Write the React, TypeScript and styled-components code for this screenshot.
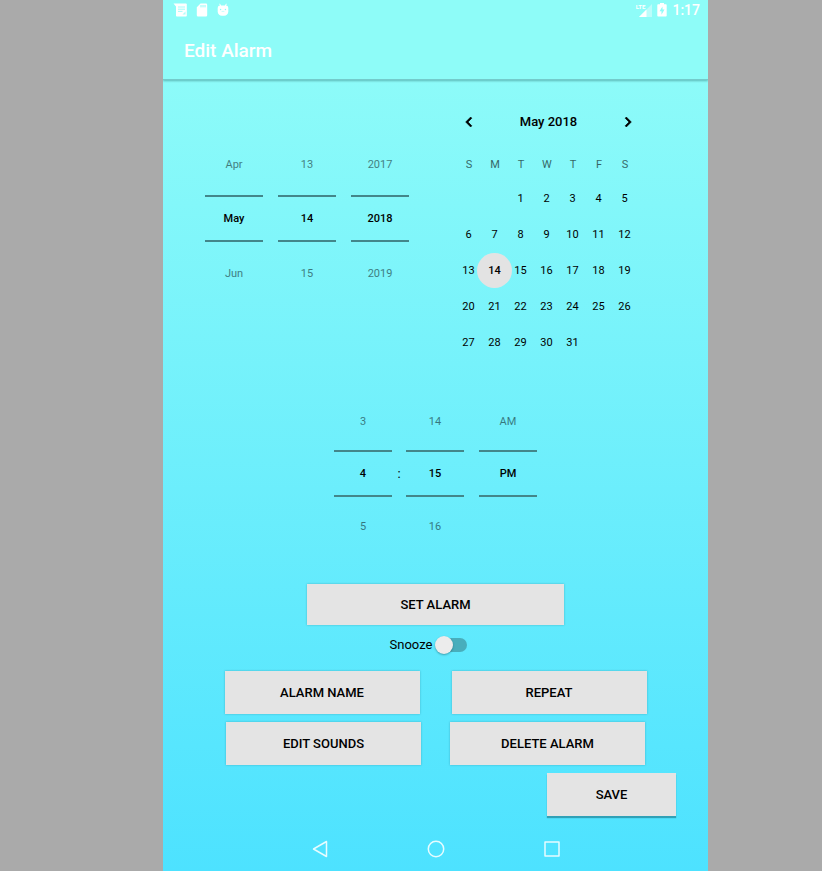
import React, { useState } from "react";
import styled, { createGlobalStyle } from "styled-components";

const GlobalStyle = createGlobalStyle`
  * { box-sizing: border-box; }
  body {
    margin: 0;
    background: #aaaaaa;
    color: #000000;
    font-family: Roboto, "Liberation Sans", sans-serif;
  }
  button, input { font-family: inherit; color: inherit; }
  button { border: 0; padding: 0; background: none; cursor: pointer; }
`;

const Page = styled.div`
  display: grid;
  grid-template-columns: 163fr minmax(480px, 545fr) 114fr;
  min-height: 100vh;
`;

const Screen = styled.div`
  grid-column: 2;
  display: flex;
  flex-direction: column;
  overflow: hidden;
  background: linear-gradient(#8ffcf8, #8dfbf9 9%, #4de2ff);
`;

const Header = styled.header`
  background: #8efcf8;
  border-bottom: 1px solid #74cbcb;
  box-shadow: 0 1px 2px rgba(0, 60, 60, 0.35);
`;

const StatusBar = styled.div`
  display: flex;
  align-items: center;
  justify-content: space-between;
  height: 20px;
  padding: 0 8px 0 10px;
  color: #ffffff;
`;

const StatusGroup = styled.div<{ $gap: number }>`
  display: flex;
  align-items: center;
  gap: ${(p) => p.$gap}px;
`;

const Clock = styled.span`
  font-size: 14px;
  font-weight: 500;
  line-height: 20px;
`;

const Title = styled.h1`
  margin: 0;
  padding: 4px 21px 1px;
  color: #ffffff;
  font-size: 19px;
  font-weight: 500;
  line-height: 54px;
`;

const Main = styled.main`
  flex: 1;
  display: flex;
  flex-direction: column;
  align-items: center;
  padding-top: 30px;
`;

const DateRow = styled.section`
  display: flex;
  justify-content: center;
  gap: 47px;
  width: 100%;
  padding: 0 28px 0 0;
`;

const DatePickers = styled.div`
  display: flex;
  gap: 15px;
  padding-top: 44px;
`;

const TimePickers = styled.section`
  display: grid;
  grid-template-columns: 58px 14px 58px 58px;
  margin-top: 65px;
  padding-right: 15px;

  > :last-child { margin-left: 15px; }
`;

const Colon = styled.span`
  align-self: center;
  text-align: center;
  font-size: 13px;
  line-height: 20px;
`;

const PickerColumn = styled.div<{ $gap: number }>`
  display: flex;
  flex-direction: column;
  gap: ${(p) => p.$gap}px;
  width: 58px;
`;

const PickerStep = styled.button`
  height: 20px;
  font-size: 11px;
  line-height: 22px;
  text-align: center;
  opacity: 0.5;
`;

const PickerValue = styled.input`
  width: 100%;
  height: 47px;
  padding: 0;
  border: solid #43868a;
  border-width: 2px 0;
  border-radius: 0;
  background: none;
  font-size: 11px;
  font-weight: 500;
  text-align: center;
  outline: 0;
`;

const Calendar = styled.div`
  width: 182px;
`;

const MonthBar = styled.div`
  display: flex;
  align-items: center;
  justify-content: space-between;
  height: 24px;
  padding: 0 0 0 3px;
  margin-bottom: 14px;
`;

const MonthName = styled.h2`
  margin: 0;
  font-size: 13px;
  font-weight: 500;
  line-height: 24px;
`;

const MonthButton = styled.button`
  display: flex;
  width: 20px;
  height: 20px;
`;

const MonthView = styled.div`
  height: 198px;
  overflow: hidden;
`;

const MonthTable = styled.table`
  width: 100%;
  table-layout: fixed;
  border-collapse: collapse;
  font-size: 11px;

  th {
    height: 32px;
    padding: 0;
    font-weight: 400;
    opacity: 0.6;
  }

  td {
    height: 36px;
    padding: 0;
    text-align: center;
  }
`;

const Day = styled.button<{ $selected: boolean }>`
  display: grid;
  place-items: center;
  width: 35px;
  height: 35px;
  margin: 0 -4px 0 -5px;
  border-radius: 50%;
  font-size: 11px;
  font-weight: ${(p) => (p.$selected ? 500 : 400)};
  background: ${(p) => (p.$selected ? "#e3e3e3" : "none")};
`;

const ActionButton = styled.button<{ $width: number; $raised?: boolean }>`
  width: ${(p) => p.$width}px;
  height: 43px;
  background: #e4e4e4;
  font-size: 13px;
  font-weight: 500;
  box-shadow: ${(p) =>
    p.$raised
      ? "0 2px 1px rgba(0, 60, 75, 0.4)"
      : "0 0 2px rgba(0, 60, 75, 0.3)"};
`;

const SetButton = styled(ActionButton)`
  height: 41px;
  margin-top: 48px;
`;

const SnoozeLabel = styled.label`
  display: flex;
  align-items: center;
  gap: 3px;
  height: 18px;
  margin: 11px 14px 17px 0;
  font-size: 13px;
  line-height: 18px;
`;

const Switch = styled.input`
  appearance: none;
  display: flex;
  align-items: center;
  width: 32px;
  height: 14px;
  margin: 0;
  border-radius: 7px;
  background: linear-gradient(90deg, transparent 8px, #48aebc 8px);
  cursor: pointer;

  &::before {
    content: "";
    width: 18px;
    height: 18px;
    border-radius: 50%;
    background: #ececec;
    box-shadow: 0 1px 2px rgba(0, 50, 60, 0.4);
  }

  &:checked { background: #48aebc; }
  &:checked::before { margin-left: 14px; }
`;

const ButtonRow = styled.div<{ $gap: number }>`
  display: flex;
  gap: ${(p) => p.$gap}px;
  margin-bottom: 8px;
`;

const SaveRow = styled.div`
  display: flex;
  justify-content: flex-end;
  width: 100%;
  padding-right: 32px;
`;

const NavBar = styled.nav`
  display: flex;
  align-items: center;
  justify-content: center;
  gap: 92px;
  height: 44px;
`;

const NavButton = styled.button`
  display: flex;
  width: 24px;
  height: 24px;
`;

const MessageIcon = () => (
  <svg width="14" height="14" viewBox="0 0 14 14" aria-hidden="true">
    <path fill="#fff" d="M.5 .5H13a.8.8 0 0 1 .8.8v11.400a.8.8 0 0 1-.8.8H3.800a.8.8 0 0 1-.8-.8V3.500z" />
    <path fill="none" stroke="#8efcf8" strokeWidth="1" d="M5 4h7M5 6.200h7M5 8.400h4.500" opacity=".8" />
    <path fill="#8efcf8" d="M9.500 11.500l3-3v3z" opacity=".7" />
  </svg>
);

const SdCardIcon = () => (
  <svg width="12" height="14" viewBox="0 0 12 14" aria-hidden="true">
    <path fill="#fff" d="M4.500.5H10a1.200 1.200 0 0 1 1.200 1.200v10.600a1.200 1.200 0 0 1-1.200 1.200H2a1.200 1.200 0 0 1-1.200-1.200V4.200z" />
    <path stroke="#8efcf8" strokeWidth="1" d="M5 2v2.400M7 2v2.400M9 2v2.400" />
  </svg>
);

const DroidIcon = () => (
  <svg width="12" height="14" viewBox="0 0 12 14" aria-hidden="true">
    <path fill="#fff" d="M3 2.500h6c1.600 0 2.300 1.200 2.300 3v3c0 2.600-1.800 4.300-4.300 4.300H5C2.500 12.800.7 11.100.7 8.500v-3c0-1.800.7-3 2.300-3z" />
    <path stroke="#fff" strokeWidth="1" d="M2.700.8l1 2.400M9.300.8l-1 2.400" />
    <circle cx="3.600" cy="6.500" r=".7" fill="#8efcf8" />
    <circle cx="8.400" cy="6.500" r=".7" fill="#8efcf8" />
    <path d="M4.600 8.400h2.800" stroke="#8efcf8" strokeWidth=".5" />
  </svg>
);

const Signal = styled.span`
  display: flex;
  align-items: flex-start;
  font-size: 6px;
  font-weight: 700;
  line-height: 7px;
  height: 14px;

  svg { margin: 1px 0 0 -6px; }
`;

const SignalIcon = () => (
  <svg width="13" height="13" viewBox="0 0 13 13" aria-hidden="true">
    <path fill="#fff" opacity=".4" d="M13 0v13H0z" />
    <path fill="#fff" d="M7.500 5.500V13H0z" />
  </svg>
);

const BatteryIcon = () => (
  <svg width="10" height="14" viewBox="0 0 10 14" aria-hidden="true">
    <path fill="#fff" d="M3 0h4v1.300h1.900a.8.8 0 0 1 .8.8v10.600a.8.8 0 0 1-.8.8H1.100a.8.8 0 0 1-.8-.8V2.100a.8.8 0 0 1 .8-.8H3z" />
    <path fill="#8efcf8" d="M5.500 3.500v3h2L4.500 11.700V8.200h-2z" />
  </svg>
);

const Chevron = ({ right }: { right?: boolean }) => (
  <svg width="20" height="20" viewBox="0 0 24 24" fill="#000" stroke="#000" strokeWidth=".7" aria-hidden="true">
    <path
      d={
        right
          ? "M8.590 16.590 13.170 12 8.590 7.410 10 6l6 6-6 6z"
          : "M15.410 7.410 14 6l-6 6 6 6 1.410-1.410L10.830 12z"
      }
    />
  </svg>
);

type PickerProps = { label: string; values: string[]; gap: number };

function Picker({ label, values, gap }: PickerProps) {
  const [previous, current, next] = values;
  return (
    <PickerColumn $gap={gap}>
      <PickerStep type="button">{previous}</PickerStep>
      <PickerValue aria-label={label} defaultValue={current} />
      {next && <PickerStep type="button">{next}</PickerStep>}
    </PickerColumn>
  );
}

const WEEKDAYS = ["S", "M", "T", "W", "T", "F", "S"];
const FIRST_WEEKDAY = 2;
const WEEKS = Array.from({ length: 5 }, (_, week) =>
  WEEKDAYS.map((_, day) => {
    const date = week * 7 + day - FIRST_WEEKDAY + 1;
    return date >= 1 && date <= 31 ? date : null;
  })
);

function MonthCalendar() {
  const [selected, setSelected] = useState(14);
  return (
    <Calendar>
      <MonthBar>
        <MonthButton type="button" aria-label="Previous month"><Chevron /></MonthButton>
        <MonthName>May 2018</MonthName>
        <MonthButton type="button" aria-label="Next month"><Chevron right /></MonthButton>
      </MonthBar>
      <MonthView>
        <MonthTable>
          <thead>
            <tr>{WEEKDAYS.map((d, i) => <th key={i} scope="col">{d}</th>)}</tr>
          </thead>
          <tbody>
            {WEEKS.map((week, w) => (
              <tr key={w}>
                {week.map((date, d) => (
                  <td key={d}>
                    {date && (
                      <Day type="button" $selected={date === selected} onClick={() => setSelected(date)}>
                        {date}
                      </Day>
                    )}
                  </td>
                ))}
              </tr>
            ))}
          </tbody>
        </MonthTable>
      </MonthView>
    </Calendar>
  );
}

export default function App() {
  return (
    <>
      <GlobalStyle />
      <Page>
        <Screen>
          <Header>
            <StatusBar>
              <StatusGroup $gap={9}>
                <MessageIcon />
                <SdCardIcon />
                <DroidIcon />
              </StatusGroup>
              <StatusGroup $gap={5}>
                <Signal>LTE<SignalIcon /></Signal>
                <BatteryIcon />
                <Clock>1:17</Clock>
              </StatusGroup>
            </StatusBar>
            <Title>Edit Alarm</Title>
          </Header>
          <Main>
            <DateRow>
              <DatePickers>
                <Picker label="Month" values={["Apr", "May", "Jun"]} gap={21} />
                <Picker label="Day" values={["13", "14", "15"]} gap={21} />
                <Picker label="Year" values={["2017", "2018", "2019"]} gap={21} />
              </DatePickers>
              <MonthCalendar />
            </DateRow>
            <TimePickers>
              <Picker label="Hour" values={["3", "4", "5"]} gap={19} />
              <Colon>:</Colon>
              <Picker label="Minute" values={["14", "15", "16"]} gap={19} />
              <Picker label="AM or PM" values={["AM", "PM"]} gap={19} />
            </TimePickers>
            <SetButton type="button" $width={257}>SET ALARM</SetButton>
            <SnoozeLabel>
              Snooze
              <Switch type="checkbox" role="switch" />
            </SnoozeLabel>
            <ButtonRow $gap={32}>
              <ActionButton type="button" $width={195}>ALARM NAME</ActionButton>
              <ActionButton type="button" $width={195}>REPEAT</ActionButton>
            </ButtonRow>
            <ButtonRow $gap={29}>
              <ActionButton type="button" $width={195}>EDIT SOUNDS</ActionButton>
              <ActionButton type="button" $width={195}>DELETE ALARM</ActionButton>
            </ButtonRow>
            <SaveRow>
              <ActionButton type="button" $width={129} $raised>SAVE</ActionButton>
            </SaveRow>
          </Main>
          <NavBar aria-label="System">
            <NavButton type="button" aria-label="Back">
              <svg width="24" height="24" viewBox="0 0 24 24" fill="none" stroke="#e6fcff" strokeWidth="1.500" strokeLinejoin="round" aria-hidden="true">
                <path d="M18.500 4.500v15L5.500 12z" />
              </svg>
            </NavButton>
            <NavButton type="button" aria-label="Home">
              <svg width="24" height="24" viewBox="0 0 24 24" fill="none" stroke="#e6fcff" strokeWidth="1.500" aria-hidden="true">
                <circle cx="12" cy="12" r="7.700" />
              </svg>
            </NavButton>
            <NavButton type="button" aria-label="Overview">
              <svg width="24" height="24" viewBox="0 0 24 24" fill="none" stroke="#e6fcff" strokeWidth="1.500" strokeLinejoin="round" aria-hidden="true">
                <rect x="5" y="5" width="14" height="14" />
              </svg>
            </NavButton>
          </NavBar>
        </Screen>
      </Page>
    </>
  );
}
